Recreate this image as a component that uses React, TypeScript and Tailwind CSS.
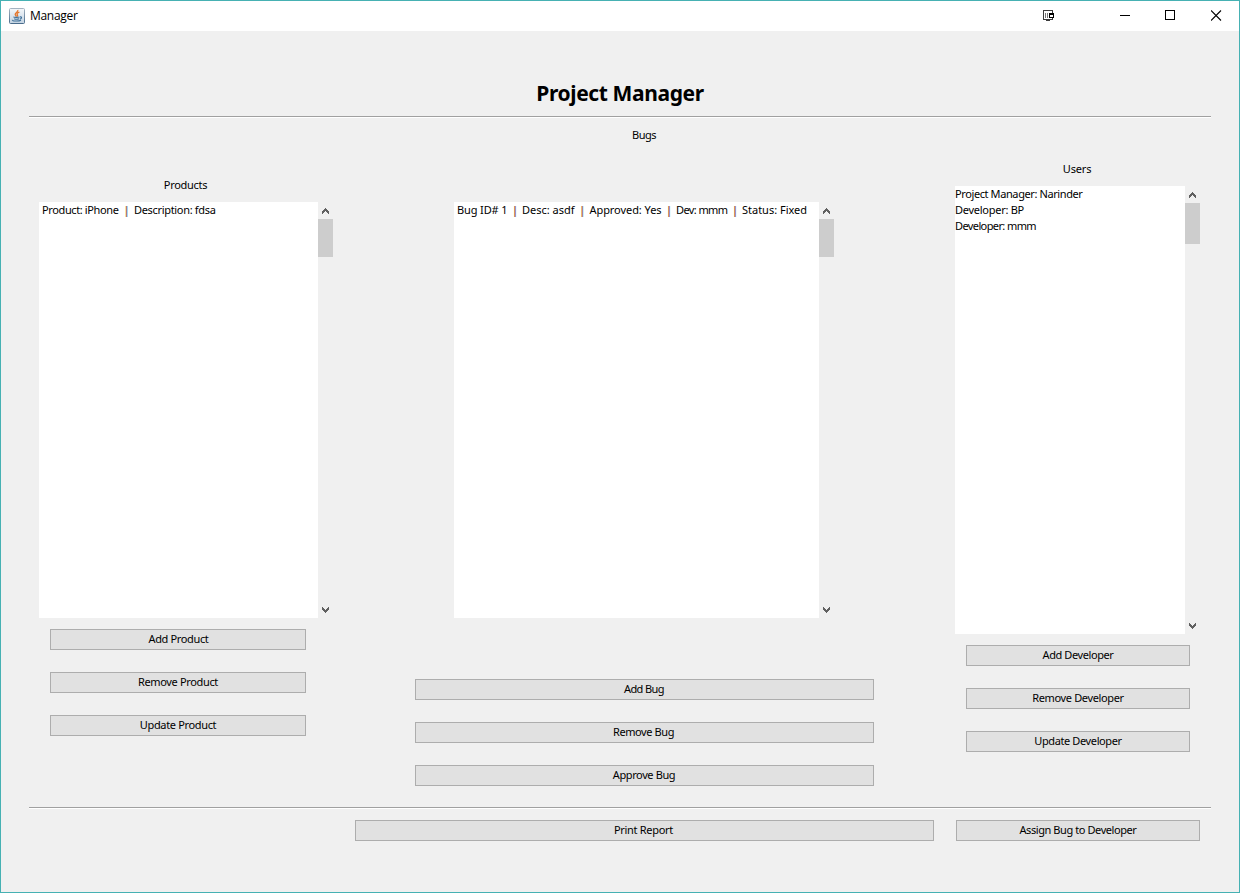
import { useLayoutEffect, useRef, useState } from "react";

type FitProps = { text: string; width: number; className?: string };

// Spreads the letter spacing so that a label takes exactly the given width.
function Fit({ text, width, className = "" }: FitProps) {
  const ref = useRef<HTMLSpanElement>(null);
  const [spacing, setSpacing] = useState(0);
  useLayoutEffect(() => {
    if (ref.current) {
      const natural = ref.current.getBoundingClientRect().width;
      setSpacing((s) => s + (width - natural) / text.length);
    }
  }, [text, width]);
  return (
    <span ref={ref} className={`inline-block whitespace-pre ${className}`} style={{ letterSpacing: `${spacing}px` }}>
      {text}
    </span>
  );
}

function Button({ text, width, className = "" }: FitProps) {
  return (
    <button
      className={`flex h-[21px] items-center justify-center border border-[#adadad] bg-[#e1e1e1] pb-[2px] text-[11px] leading-[17px] ${className}`}
    >
      <Fit text={text} width={width} />
    </button>
  );
}

function Arrow({ down = false }: { down?: boolean }) {
  return (
    <svg width="7" height="6" viewBox="0 0 7 6" shapeRendering="crispEdges" className={down ? "rotate-180" : ""}>
      <path
        fill="#606060"
        d="M0 3h1v3h-1zM1 2h1v3h-1zM2 1h1v3h-1zM3 0h1v3h-1zM4 1h1v3h-1zM5 2h1v3h-1zM6 3h1v3h-1z"
      />
    </svg>
  );
}

function ScrollBar({ thumb }: { thumb: string }) {
  return (
    <div className="flex w-[15px] flex-col items-center">
      <div className="flex h-[17px] items-center pt-px">
        <Arrow />
      </div>
      <div className={`w-full bg-[#cdcdcd] ${thumb}`} />
      <div className="mt-auto flex h-4 items-end pb-[5px]">
        <Arrow down />
      </div>
    </div>
  );
}

function Bar({ width }: { width: string }) {
  return (
    <span className={`text-center text-[#b0622a] [text-shadow:0.5px_0_#3f6f9c] ${width}`}>|</span>
  );
}

function Rule() {
  return <div className="mx-7 h-[2px] shrink-0 border-t border-[#a0a0a0] bg-white" />;
}

function JavaIcon() {
  return (
    <svg width="16" height="16" viewBox="0 0 16 16">
      <defs>
        <linearGradient id="frame" x1="0" y1="0" x2="0" y2="1">
          <stop offset="0" stopColor="#a4b3c1" />
          <stop offset="1" stopColor="#4a6c8c" />
        </linearGradient>
        <linearGradient id="plate" x1="0" y1="0" x2="0" y2="1">
          <stop offset="0" stopColor="#f4f7fa" />
          <stop offset="1" stopColor="#c3d3e2" />
        </linearGradient>
      </defs>
      <rect x="0.5" y="0.5" width="15" height="15" rx="1" fill="url(#plate)" stroke="url(#frame)" />
      <path d="M8.8 2C9.6 4 5.8 4.9 6.2 6.5C6.4 7.4 7.3 7.6 7.4 8.6M10.4 4.2C8 5 7.5 5.9 8.5 7C8.9 7.5 8.5 8.1 8.2 8.5" fill="none" stroke="#e5762b" strokeWidth="1.3" />
      <path d="M4.8 8.8C4.5 9.6 9.5 9.5 10.5 9M5.2 10.7C6.5 11.3 8.8 11.3 10 10.8M11 8.9C13.2 8.5 13 10.7 10.8 11.1M3.5 12C2.5 13 9.5 13.6 12 12.2" fill="none" stroke="#3f7099" strokeWidth="1.1" />
    </svg>
  );
}

function TitleBar() {
  return (
    <div className="flex h-[30px] shrink-0 items-start bg-white">
      <div className="ml-2 mt-[7px]">
        <JavaIcon />
      </div>
      <Fit text="Manager" width={47.5} className="ml-[5px] font-['Open_Sans','Noto_Sans',sans-serif] text-[12px] leading-[30px]" />
      <div className="ml-auto mr-[17px] mt-[9px] flex items-start">
        <svg width="12" height="12" viewBox="0 0 12 12" shapeRendering="crispEdges" className="mr-[65px]">
          <path d="M0.5 0.5H9.5V9.5H0.5Z" fill="#fff" stroke="#3c3c3c" />
          <path d="M3 10h4v1h-4z" fill="#3c3c3c" />
          <path d="M2 3h1v5h-1zM4 3h1v5h-1z" fill="#777" />
          <path d="M6 3h5v5h-5z" fill="#000" />
          <path d="M7 5h3v2h-3z" fill="#fff" />
        </svg>
        <svg width="10" height="11" viewBox="0 0 10 11" shapeRendering="crispEdges" className="mr-[35px]">
          <path d="M0 5h10v1H0z" fill="#000" />
        </svg>
        <svg width="11" height="11" viewBox="0 0 11 11" shapeRendering="crispEdges" className="mr-[35px]">
          <path d="M0.5 0.5H9.5V9.5H0.5Z" fill="none" stroke="#000" />
        </svg>
        <svg width="11" height="11" viewBox="0 0 11 11">
          <path d="M0 0.5L10 10.5M10 0.5L0 10.5" fill="none" stroke="#000" strokeWidth="1.1" />
        </svg>
      </div>
    </div>
  );
}

export default function App() {
  return (
    <div className="flex h-[893px] w-[1240px] flex-col overflow-hidden border border-[#46b1b3] bg-[#f0f0f0] font-['Noto_Sans','DejaVu_Sans_Condensed',sans-serif] text-[11px] leading-4 text-black">
      <TitleBar />
      <h1 className="h-[85px] shrink-0 pt-[49px] text-center text-[21px] font-bold leading-[26px]">
        <Fit text="Project Manager" width={167.5} />
      </h1>
      <Rule />
      <main className="flex h-[689px] shrink-0 pl-[38px]">
        <section className="flex w-[294px] flex-col pt-[59px]">
          <div className="pr-px text-center">
            <Fit text="Products" width={43.5} />
          </div>
          <div className="mt-[9px] flex h-[416px]">
            <div className="flex w-[279px] items-start bg-white pl-[3px]">
              <Fit text="Product: iPhone" width={76.5} />
              <Bar width="w-[15.5px]" />
              <Fit text="Description: fdsa" width={81.5} />
            </div>
            <ScrollBar thumb="h-[38px]" />
          </div>
          <div className="ml-[11px] mt-[11px] flex w-64 flex-col gap-[22px]">
            <Button text="Add Product" width={60} className="pl-px" />
            <Button text="Remove Product" width={80} />
            <Button text="Update Product" width={76.5} />
          </div>
        </section>

        <section className="ml-[82px] flex w-[459px] flex-col pt-[9px]">
          <div className="pr-px text-center">
            <Fit text="Bugs" width={24} />
          </div>
          <div className="ml-[39px] mt-[59px] flex h-[416px]">
            <div className="flex w-[365px] items-start bg-white pl-[3px]">
              <Fit text="Bug ID# 1" width={50.5} />
              <Bar width="w-[14.5px]" />
              <Fit text="Desc: asdf" width={52.5} />
              <Bar width="w-[15px]" />
              <Fit text="Approved: Yes" width={72} />
              <Bar width="w-[14.5px]" />
              <Fit text="Dev: mmm" width={51.5} />
              <Bar width="w-[14.5px]" />
              <Fit text="Status: Fixed" width={65} />
            </div>
            <ScrollBar thumb="h-[38px]" />
          </div>
          <div className="mt-[61px] flex flex-col gap-[22px]">
            <Button text="Add Bug" width={40} className="pr-px" />
            <Button text="Remove Bug" width={61} className="pr-[2px]" />
            <Button text="Approve Bug" width={62.5} className="pr-px" />
          </div>
        </section>

        <section className="ml-[81px] flex w-[245px] flex-col pt-[43px]">
          <div className="pr-px text-center">
            <Fit text="Users" width={28.5} />
          </div>
          <div className="mt-[9px] flex h-[448px]">
            <div className="flex w-[230px] flex-col items-start bg-white">
              <Fit text="Project Manager: Narinder" width={127.5} />
              <Fit text="Developer: BP" width={69} />
              <Fit text="Developer: mmm" width={81} />
            </div>
            <ScrollBar thumb="h-[41px]" />
          </div>
          <div className="ml-[11px] mt-[11px] flex w-56 flex-col gap-[22px]">
            <Button text="Add Developer" width={71} />
            <Button text="Remove Developer" width={91.5} />
            <Button text="Update Developer" width={87.5} />
          </div>
        </section>
      </main>
      <Rule />
      <footer className="flex gap-[22px] pl-[354px] pt-[11px]">
        <Button text="Print Report" width={59} className="w-[579px] pr-[2px]" />
        <Button text="Assign Bug to Developer" width={117} className="w-[244px]" />
      </footer>
    </div>
  );
}
